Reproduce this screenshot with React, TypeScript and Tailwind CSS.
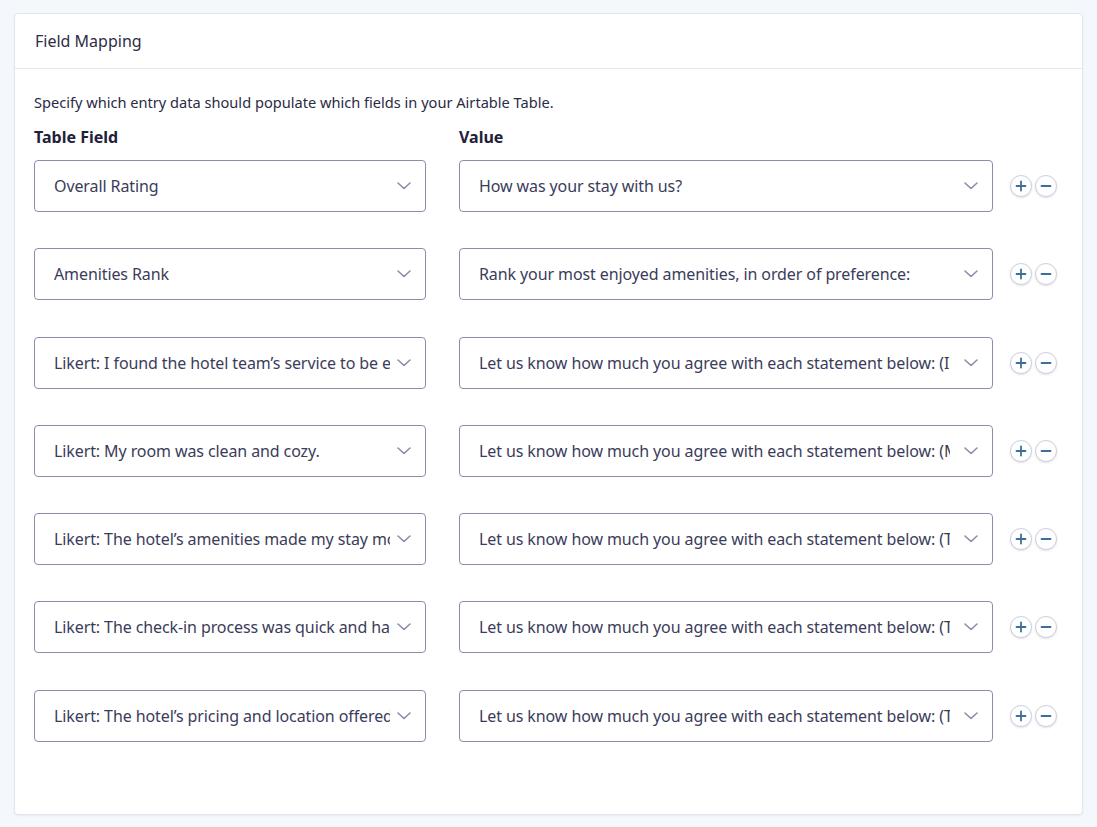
import React from "react";

const rows = [
  { field: "Overall Rating", value: "How was your stay with us?" },
  { field: "Amenities Rank", value: "Rank your most enjoyed amenities, in order of preference:" },
  {
    field: "Likert: I found the hotel team’s service to be excellent.",
    value: "Let us know how much you agree with each statement below: (I found the hotel team’s service to be excellent.)",
  },
  {
    field: "Likert: My room was clean and cozy.",
    value: "Let us know how much you agree with each statement below: (My room was clean and cozy.)",
  },
  {
    field: "Likert: The hotel’s amenities made my stay more enjoyable.",
    value: "Let us know how much you agree with each statement below: (The hotel’s amenities made my stay more enjoyable.)",
  },
  {
    field: "Likert: The check-in process was quick and hassle-free.",
    value: "Let us know how much you agree with each statement below: (The check-in process was quick and hassle-free.)",
  },
  {
    field: "Likert: The hotel’s pricing and location offered great value.",
    value: "Let us know how much you agree with each statement below: (The hotel’s pricing and location offered great value.)",
  },
];

function Chevron() {
  return (
    <svg width="14" height="8" viewBox="0 0 14 8" fill="none" className="shrink-0">
      <path d="M1 1l6 5.5L13 1" stroke="#8c8baa" strokeWidth="1.6" strokeLinecap="round" strokeLinejoin="round" />
    </svg>
  );
}

function Select({ text, className }: { text: string; className: string }) {
  return (
    <div
      className={`${className} relative flex h-[52px] shrink-0 items-center overflow-hidden rounded-[4px] border border-[#8d8cad] bg-white pl-[19px]`}
    >
      <span className="block overflow-hidden whitespace-nowrap text-[16px] tracking-[-0.1px] text-[#3b3c5a]">
        {text}
      </span>
      <div className="absolute right-[14px] top-1/2 -translate-y-1/2">
        <Chevron />
      </div>
    </div>
  );
}

function RoundButton({ kind }: { kind: "plus" | "minus" }) {
  return (
    <button className="flex h-[22px] w-[22px] items-center justify-center rounded-full border border-[#cfcfe0] bg-white shadow-[0_1px_2px_rgba(60,60,100,0.15)]">
      <svg width="12" height="12" viewBox="0 0 12 12">
        <path d="M1.5 6h9" stroke="#3d6f98" strokeWidth="1.8" strokeLinecap="round" />
        {kind === "plus" && <path d="M6 1.5v9" stroke="#3d6f98" strokeWidth="1.8" strokeLinecap="round" />}
      </svg>
    </button>
  );
}

export default function App() {
  return (
    <div
      className="min-h-[827px] bg-[#f4f7fb] px-[14px] py-[13px]"
      style={{ fontFamily: '"Segoe UI", "Noto Sans", sans-serif' }}
    >
      <div className="rounded-[4px] border border-[#e3e5ee] bg-white shadow-[0_1px_2px_rgba(40,50,90,0.06)]">
        <div className="flex h-[55px] items-center border-b border-[#e6e8f0] px-[20px]">
          <h2 className="text-[16px] text-[#2c2d47]">Field Mapping</h2>
        </div>
        <div className="pl-[19px] pr-[26px] pb-[72px] pt-[23px]">
          <p className="text-[14.6px] leading-[20px] text-[#2a2b45]">
            Specify which entry data should populate which fields in your Airtable Table.
          </p>
          <div className="mt-[14px] flex gap-[33px] text-[16px] font-bold leading-[22px] text-[#1f2039]">
            <div className="w-[392px]">Table Field</div>
            <div>Value</div>
          </div>
          <div className="mt-[12px] flex flex-col gap-[36.3px]">
            {rows.map((r) => (
              <div key={r.field} className="flex items-center gap-[33px]">
                <Select text={r.field} className="w-[392px] pr-[35px]" />
                <div className="flex items-center">
                  <Select text={r.value} className="w-[534px] pr-[42px]" />
                  <div className="ml-[17px] flex gap-[3px]">
                    <RoundButton kind="plus" />
                    <RoundButton kind="minus" />
                  </div>
                </div>
              </div>
            ))}
          </div>
        </div>
      </div>
    </div>
  );
}
